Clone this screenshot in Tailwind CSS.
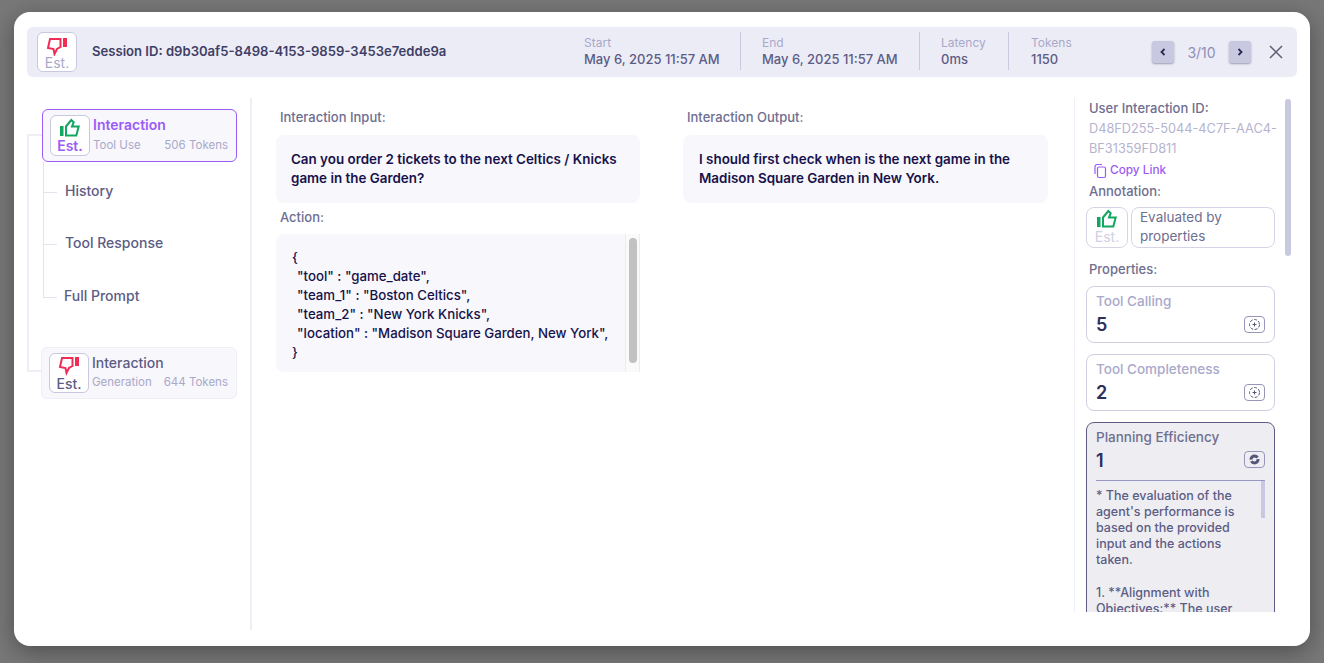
<!DOCTYPE html>
<html><head><meta charset="utf-8"><script src="https://cdn.jsdelivr.net/npm/@tailwindcss/browser@4"></script></head>
<body class="m-0 h-[663px] w-[1324px] overflow-hidden bg-[#787878] font-['Inter',sans-serif]">
<div class="ml-[14px] mt-[12px] flex h-[634px] w-[1296px] flex-col rounded-[16px] bg-white px-[13px] pt-[15px] shadow-[0_6px_24px_rgba(0,0,0,0.35)]">
  <header class="flex h-[50px] shrink-0 items-center rounded-[6px] bg-[#ECECF6] pb-[2px] pl-[10px]">
    <div class="mt-[2px] flex h-[40px] w-[40px] flex-col items-center rounded-[6px] border border-[#C8C8E0] bg-white pt-[4px]">
      <svg width="22" height="19" viewBox="0 0 22 19" fill="none"><path d="M4 2h10.500v8l-3.500 2-2.500 5-1-5-5.500-1z" stroke="#EF2D56" stroke-width="2"/><rect x="17" y="1" width="4" height="9" fill="#EF2D56"/></svg>
      <span class="text-[14px] leading-[14px] text-[#A9A9C9]">Est.</span>
    </div>
    <div class="ml-[15px] mt-[2px] w-[492px] text-[13.100px] font-semibold text-[#3F3F66]">Session ID: d9b30af5-8498-4153-9859-3453e7edde9a</div>
    <div class="flex h-[38px] w-[157px] flex-col justify-center border-r border-[#C8C8E0] leading-[16px]"><span class="text-[12px] text-[#A9A9C9]">Start</span><span class="text-[13px] font-medium text-[#5C5C85]">May 6, 2025 11:57 AM</span></div>
    <div class="flex h-[38px] w-[179px] flex-col justify-center border-r border-[#C8C8E0] pl-[21px] leading-[16px]"><span class="text-[12px] text-[#A9A9C9]">End</span><span class="text-[13px] font-medium text-[#5C5C85]">May 6, 2025 11:57 AM</span></div>
    <div class="flex h-[38px] w-[89px] flex-col justify-center border-r border-[#C8C8E0] pl-[21px] leading-[16px]"><span class="text-[12px] text-[#A9A9C9]">Latency</span><span class="text-[13px] font-medium text-[#5C5C85]">0ms</span></div>
    <div class="flex h-[38px] w-[143px] flex-col justify-center pl-[22px] leading-[16px]"><span class="text-[12px] text-[#A9A9C9]">Tokens</span><span class="text-[13px] font-medium text-[#5C5C85]">1150</span></div>
    <button class="mt-[2px] flex h-[22px] w-[22px] items-center justify-center rounded-[3px] bg-[#C8C8E0] shadow-[0_1px_2px_rgba(60,60,100,0.45)]"><svg width="8" height="10" viewBox="0 0 8 10" fill="none"><path d="M5.500 2 2.500 5l3 3" stroke="#2A2A55" stroke-width="1.800"/></svg></button>
    <span class="mt-[2px] w-[55px] text-center text-[14px] text-[#8F8FB5]">3/10</span>
    <button class="mt-[2px] flex h-[22px] w-[22px] items-center justify-center rounded-[3px] bg-[#C8C8E0] shadow-[0_1px_2px_rgba(60,60,100,0.45)]"><svg width="8" height="10" viewBox="0 0 8 10" fill="none"><path d="M2.500 2l3 3-3 3" stroke="#2A2A55" stroke-width="1.800"/></svg></button>
    <svg class="ml-[18px] mt-[2px]" width="14" height="14" viewBox="0 0 14 14" fill="none"><path d="M1 1l12 12M13 1 1 13" stroke="#5F5F72" stroke-width="1.500"/></svg>
  </header>
  <div class="flex min-h-0 flex-1 pt-[21px]">
    <aside class="relative h-[532px] w-[225px] shrink-0 border-r-2 border-[#EEEEF6]">
      <div class="absolute left-0 top-[36px] h-[2px] w-[15px] bg-[#EEEEF6]"></div>
      <div class="absolute left-0 top-[37px] h-[236px] w-[2px] bg-[#EEEEF6]"></div>
      <div class="absolute left-0 top-[272px] h-[2px] w-[15px] bg-[#EEEEF6]"></div>
      <div class="absolute left-[16px] top-[64px] h-[135px] w-[1px] bg-[#E4E4F0]"></div>
      <div class="absolute left-[16px] top-[94px] h-[1px] w-[14px] bg-[#E4E4F0]"></div>
      <div class="absolute left-[16px] top-[146px] h-[1px] w-[14px] bg-[#E4E4F0]"></div>
      <div class="absolute left-[16px] top-[199px] h-[1px] w-[14px] bg-[#E4E4F0]"></div>
      <div class="ml-[15px] mt-[11px] flex h-[53px] w-[195px] items-center rounded-[6px] border border-[#9B5CF6] bg-[#F7F7FC] pl-[7px]">
        <div class="flex h-[41px] w-[40px] shrink-0 flex-col items-center rounded-[6px] border border-[#C8C8E0] bg-white pt-[2px]">
          <svg width="22" height="20" viewBox="0 0 22 20" fill="none"><rect x="1" y="8" width="3.500" height="10" fill="#12A660"/><path d="M7 8.500l5.300-6.500 2.400 2.300-1.700 4.200h6.700l-2.400 9H7z" stroke="#12A660" stroke-width="2"/></svg>
          <span class="text-[14px] font-semibold leading-[16px] text-[#9B5CF6]">Est.</span>
        </div>
        <div class="ml-[3px] flex min-w-0 flex-1 flex-col pb-[3px] pr-[8px]">
          <span class="text-[14px] font-semibold leading-[20px] text-[#9B5CF6]">Interaction</span>
          <div class="mt-[2px] flex justify-between text-[11.500px] leading-[16px] text-[#A9A9C9]"><span>Tool Use</span><span>506 Tokens</span></div>
        </div>
      </div>
      <div class="ml-[38px] mt-[19px] flex flex-col text-[14px] font-medium text-[#5C5C85]">
        <span class="h-[52px] leading-[20px]">History</span>
        <span class="h-[53px] leading-[20px]">Tool Response</span>
        <span class="-ml-px h-[20px] leading-[20px]">Full Prompt</span>
      </div>
      <div class="ml-[14px] mt-[41px] flex h-[52px] w-[196px] items-center rounded-[6px] border border-[#EEEEF6] bg-[#F7F7FC] pl-[7px]">
        <div class="flex h-[40px] w-[40px] shrink-0 flex-col items-center rounded-[6px] border border-[#C8C8E0] bg-white pt-[2px]">
          <svg width="22" height="20" viewBox="0 0 22 20" fill="none"><path d="M4 2h10.500v8l-3.500 2-2.500 5-1-5-5.500-1z" stroke="#EF2D56" stroke-width="2"/><rect x="17" y="1" width="4" height="9" fill="#EF2D56"/></svg>
          <span class="text-[14px] font-medium leading-[16px] text-[#5C5C85]">Est.</span>
        </div>
        <div class="ml-[3px] flex min-w-0 flex-1 flex-col pb-[4px] pr-[8px]">
          <span class="text-[14px] font-medium leading-[20px] text-[#5C5C85]">Interaction</span>
          <div class="mt-[1px] flex justify-between text-[11.500px] leading-[16px] text-[#A9A9C9]"><span>Generation</span><span>644 Tokens</span></div>
        </div>
      </div>
    </aside>
    <main class="flex w-[822px] shrink-0 gap-[43px] pl-[24px]">
      <div class="w-[364px]">
        <div class="ml-[4px] mt-[9px] text-[13px] font-medium leading-[20px] text-[#6E6E91]">Interaction Input:</div>
        <div class="mt-[8px] h-[68px] rounded-[8px] bg-[#F7F7FC] px-[15px] pt-[15px] text-[13.400px] font-semibold leading-[19px] text-[#17124A]">Can you order 2 tickets to the next Celtics / Knicks game in the Garden?</div>
        <div class="ml-[4px] mt-[4px] text-[13px] font-medium leading-[20px] text-[#6E6E91]">Action:</div>
        <div class="relative mt-[7px] h-[138px] rounded-[8px] bg-[#F7F7FC] pl-[16px] pt-[14px] text-[13.250px] font-medium leading-[19px] text-[#17124A]">
          <div>{</div><div class="pl-[5px]">"tool" : "game_date",</div><div class="pl-[5px]">"team_1" : "Boston Celtics",</div><div class="pl-[5px]">"team_2" : "New York Knicks",</div><div class="pl-[5px]">"location" : "Madison Square Garden, New York",</div><div>}</div>
          <div class="absolute bottom-0 right-0 top-0 w-[15px] border-x border-[#ECECEC] bg-[#FAFAFA]"><div class="mx-auto mt-[4px] h-[125px] w-[8px] rounded-full bg-[#C1C1C1]"></div></div>
        </div>
      </div>
      <div class="w-[365px]">
        <div class="ml-[4px] mt-[9px] text-[13px] font-medium leading-[20px] text-[#6E6E91]">Interaction Output:</div>
        <div class="mt-[8px] h-[68px] rounded-[8px] bg-[#F7F7FC] pl-[16px] pr-[15px] pt-[15px] text-[13.400px] font-semibold leading-[19px] text-[#17124A]">I should first check when is the next game in the Madison Square Garden in New York.</div>
      </div>
    </main>
    <aside class="relative h-[514px] w-[223px] shrink-0 overflow-hidden border-l border-[#EEEEF6] pl-[11px]">
      <div class="absolute right-[6px] top-[1px] h-[157px] w-[6px] rounded-full bg-[#C8C8E0]"></div>
      <div class="ml-[3px] text-[13px] font-medium leading-[20px] text-[#6E6E91]">User Interaction ID:</div>
      <div class="ml-[3px] mt-[1px] w-[195px] text-[12.750px] leading-[20px] text-[#B4B4CF]">D48FD255-5044-4C7F-AAC4-BF31359FD811</div>
      <div class="ml-[7px] mt-[4px] flex h-[16px] items-center gap-[2px] text-[11.800px] font-medium text-[#9B5CF6]"><svg width="15" height="16" viewBox="0 0 15 16" fill="none" stroke="#9B5CF6" stroke-width="1.200"><path d="M2 11V3.500A2 2 0 0 1 4 1.500h5"/><rect x="4.500" y="4" width="8" height="10.500" rx="1.500"/></svg>Copy Link</div>
      <div class="ml-[3px] mt-[2px] text-[13px] font-medium leading-[20px] text-[#6E6E91]">Annotation:</div>
      <div class="mt-[6px] flex gap-[3px]">
        <div class="flex h-[41px] w-[42px] flex-col items-center rounded-[8px] border border-[#D5D5E7] pt-[1px]">
          <svg width="22" height="20" viewBox="0 0 22 20" fill="none"><rect x="1" y="8" width="3.500" height="10" fill="#12A660"/><path d="M7 8.500l5.300-6.500 2.400 2.300-1.700 4.200h6.700l-2.400 9H7z" stroke="#12A660" stroke-width="2"/></svg>
          <span class="text-[14px] leading-[16px] text-[#D0D0E4]">Est.</span>
        </div>
        <div class="h-[41px] w-[144px] rounded-[8px] border border-[#D5D5E7] pl-[8px] text-[13.500px] leading-[19px] text-[#6E6E91]">Evaluated by properties</div>
      </div>
      <div class="ml-[3px] mt-[11px] text-[13px] font-medium leading-[20px] text-[#6E6E91]">Properties:</div>
      <div class="mt-[7px] flex flex-col gap-[11px]">
        <div class="relative h-[57px] w-[189px] rounded-[8px] border border-[#CFCFE4] pl-[9px] pt-[5px]">
          <div class="text-[13.500px] font-medium leading-[18px] text-[#A9A9C9]">Tool Calling</div>
          <div class="mt-[4px] text-[18px] font-semibold leading-[22px] text-[#2E2E5C]">5</div>
          <div class="absolute bottom-[9px] right-[9px] flex h-[17px] w-[21px] items-center justify-center rounded-[4px] border border-[#9696B8] bg-white"><svg width="13" height="13" viewBox="0 0 13 13" fill="none" stroke="#55557A"><circle cx="6.500" cy="6.500" r="5" stroke-dasharray="3 1.500"/><path d="M6.500 4.500v4M4.500 6.500h4"/></svg></div>
        </div>
        <div class="relative h-[57px] w-[189px] rounded-[8px] border border-[#CFCFE4] pl-[9px] pt-[5px]">
          <div class="text-[13.500px] font-medium leading-[18px] text-[#A9A9C9]">Tool Completeness</div>
          <div class="mt-[4px] text-[18px] font-semibold leading-[22px] text-[#2E2E5C]">2</div>
          <div class="absolute bottom-[9px] right-[9px] flex h-[17px] w-[21px] items-center justify-center rounded-[4px] border border-[#9696B8] bg-white"><svg width="13" height="13" viewBox="0 0 13 13" fill="none" stroke="#55557A"><circle cx="6.500" cy="6.500" r="5" stroke-dasharray="3 1.500"/><path d="M6.500 4.500v4M4.500 6.500h4"/></svg></div>
        </div>
        <div class="relative h-[260px] w-[189px] rounded-[8px] border border-[#5C5C85] bg-[#EEEEF2] px-[9px] pt-[5px]">
          <div class="text-[13.500px] font-medium leading-[18px] text-[#6E6E91]">Planning Efficiency</div>
          <div class="mt-[4px] text-[18px] font-semibold leading-[22px] text-[#2E2E5C]">1</div>
          <div class="absolute right-[9px] top-[28px] flex h-[17px] w-[21px] items-center justify-center rounded-[4px] border border-[#9696B8]"><svg width="13" height="13" viewBox="0 0 13 13" fill="none" stroke="#55557A" stroke-width="3"><circle cx="6.500" cy="6.500" r="3.500" stroke-dasharray="9 1.500"/></svg></div>
          <div class="relative mt-[8px] border-t border-[#9696C4] pt-[7px] text-[12.500px] font-medium leading-[16px] text-[#5C5C85]">
            <div class="absolute right-0 top-0 h-[37px] w-[4px] bg-[#C8C8E0]"></div>
            <p class="pr-[12px]">* The evaluation of the agent's performance is based on the provided input and the actions taken.</p>
            <p class="mt-[17px] pr-[12px]">1. **Alignment with Objectives:** The user</p>
          </div>
        </div>
      </div>
    </aside>
  </div>
</div>
</body></html>
